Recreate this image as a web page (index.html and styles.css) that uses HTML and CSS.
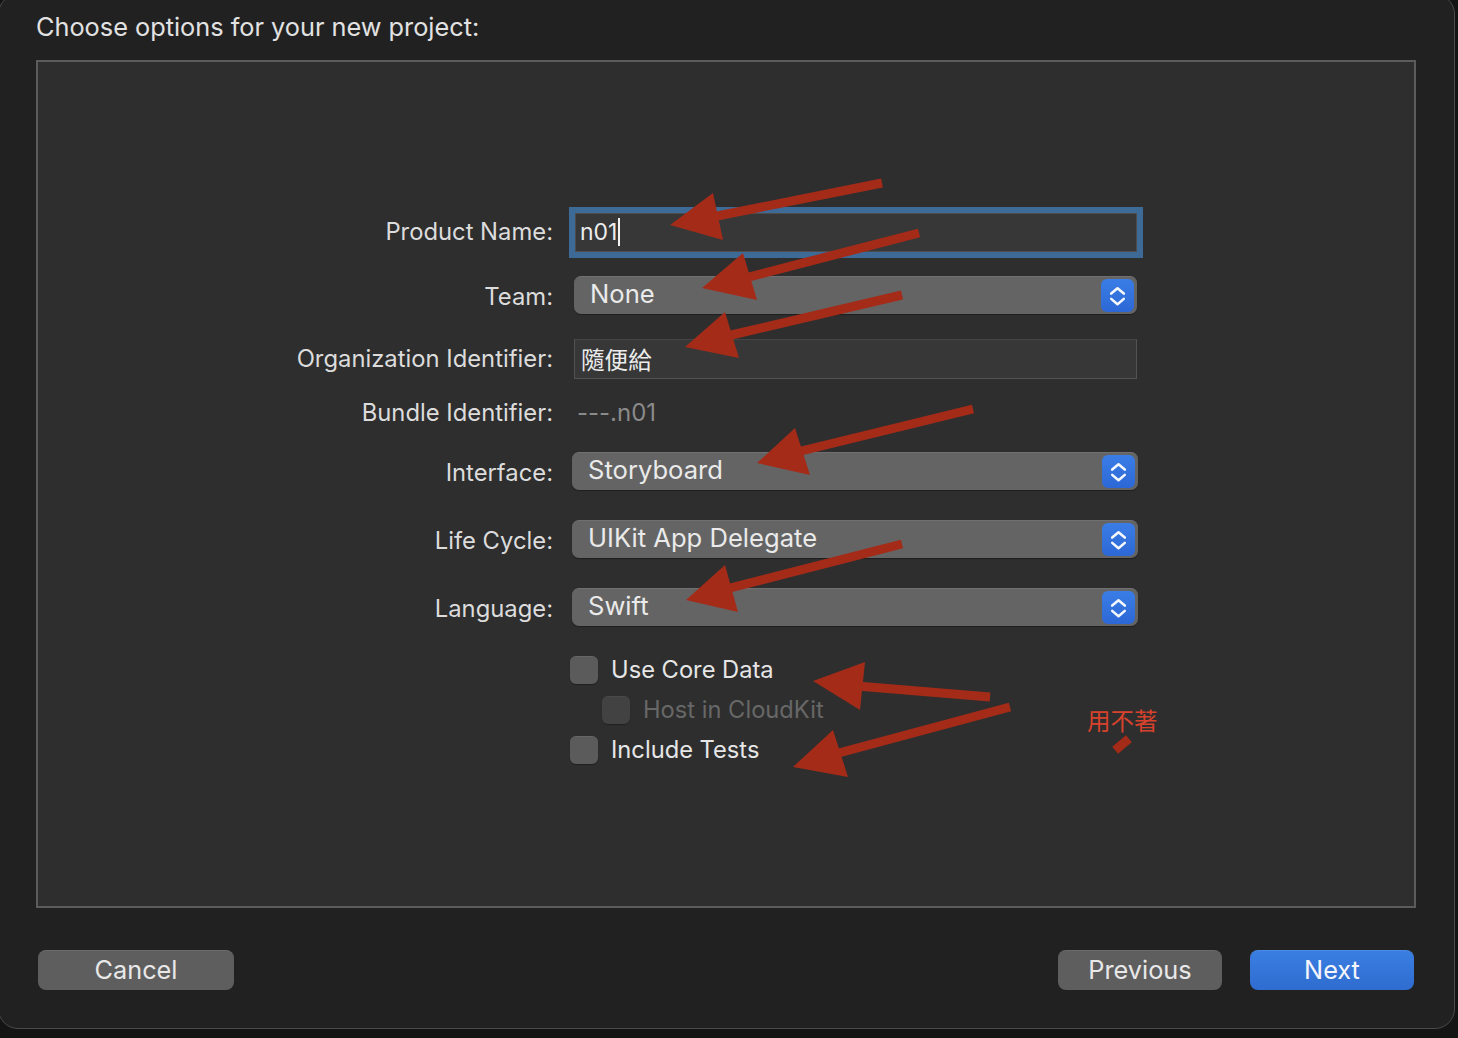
FILE: index.html
```html
<!DOCTYPE html>
<html>
<head>
<meta charset="utf-8">
<title>Choose options</title>
<link rel="stylesheet" href="styles.css">
</head>
<body>
<div class="window">
  <div class="title">Choose options for your new project:</div>
  <div class="panel">
    <div class="form">
      <div class="row r-name">
        <div class="lbl">Product Name:</div>
        <div class="field focus"><span class="val">n01</span><span class="caret"></span></div>
      </div>
      <div class="row r-team">
        <div class="lbl lbl-pop">Team:</div>
        <div class="popup team"><span class="ptext">None</span><span class="stepper"><svg viewBox="0 0 34 34" width="34" height="34"><path d="M10.5 14.5 L17 9 L23.5 14.5" /><path d="M10.5 20 L17 25.5 L23.5 20" /></svg></span></div>
      </div>
      <div class="row r-org">
        <div class="lbl">Organization Identifier:</div>
        <div class="field plain"><span class="val cjk">隨便給</span></div>
      </div>
      <div class="row r-bundle">
        <div class="lbl">Bundle Identifier:</div>
        <div class="bundle">---.n01</div>
      </div>
      <div class="row r-pop r-iface">
        <div class="lbl lbl-pop">Interface:</div>
        <div class="popup"><span class="ptext">Storyboard</span><span class="stepper"><svg viewBox="0 0 34 34" width="34" height="34"><path d="M10.5 14.5 L17 9 L23.5 14.5" /><path d="M10.5 20 L17 25.5 L23.5 20" /></svg></span></div>
      </div>
      <div class="row r-pop">
        <div class="lbl lbl-pop">Life Cycle:</div>
        <div class="popup"><span class="ptext">UIKit App Delegate</span><span class="stepper"><svg viewBox="0 0 34 34" width="34" height="34"><path d="M10.5 14.5 L17 9 L23.5 14.5" /><path d="M10.5 20 L17 25.5 L23.5 20" /></svg></span></div>
      </div>
      <div class="row r-pop">
        <div class="lbl lbl-pop">Language:</div>
        <div class="popup"><span class="ptext">Swift</span><span class="stepper"><svg viewBox="0 0 34 34" width="34" height="34"><path d="M10.5 14.5 L17 9 L23.5 14.5" /><path d="M10.5 20 L17 25.5 L23.5 20" /></svg></span></div>
      </div>
      <div class="row r-check r-check-first">
        <span class="box"></span><span class="ctext">Use Core Data</span>
      </div>
      <div class="row r-check r-sub">
        <span class="box disabled"></span><span class="ctext dim">Host in CloudKit</span>
      </div>
      <div class="row r-check">
        <span class="box"></span><span class="ctext">Include Tests</span>
      </div>
    </div>
  </div>
  <div class="footer">
    <div class="btn cancel">Cancel</div>
    <div class="right-btns">
      <div class="btn prev">Previous</div>
      <div class="btn next">Next</div>
    </div>
  </div>
</div>

<svg class="annot" width="1458" height="1038" viewBox="0 0 1458 1038">
  <g stroke="#a52b19" stroke-width="9" fill="none">
    <line x1="882" y1="183" x2="712" y2="217"/>
    <line x1="919" y1="233" x2="745" y2="278"/>
    <line x1="902" y1="295" x2="727" y2="336"/>
    <line x1="973" y1="409" x2="797" y2="452"/>
    <line x1="902" y1="544" x2="726" y2="589"/>
    <line x1="990" y1="697" x2="857" y2="686"/>
    <line x1="1010" y1="707" x2="835" y2="754"/>
  </g>
  <g fill="#a52b19">
    <polygon points="670,225 713,193 723,240"/>
    <polygon points="702,288 743,253 757,300"/>
    <polygon points="685,347 725,312 739,358"/>
    <polygon points="757,463 795,428 810,475"/>
    <polygon points="686,600 725,565 738,612"/>
    <polygon points="813,681 865,662 860,710"/>
    <polygon points="793,767 833,730 848,777"/>
    <rect x="1113" y="740" width="18" height="9" transform="rotate(-40 1122 744.5)"/>
  </g>
</svg>
<div class="note">用不著</div>
</body>
</html>
```
FILE: styles.css
```css
html, body {
  margin: 0;
  padding: 0;
}
body {
  width: 1458px;
  height: 1038px;
  overflow: hidden;
  background: #141414;
  font-family: "Inter", "Noto Sans CJK TC", sans-serif;
  color: #dedede;
  position: relative;
}
.window {
  box-sizing: border-box;
  margin: -6px 0 0 -2px;
  width: 1457px;
  height: 1035px;
  border: 1px solid #4a4a4a;
  border-radius: 20px;
  background: #212121;
  padding: 17px 0 0 37px;
}
.title {
  height: 30px;
  line-height: 30px;
  font-size: 25.3px;
  color: #e2e2e2;
}
.panel {
  box-sizing: border-box;
  margin-top: 18px;
  width: 1380px;
  height: 848px;
  border: 2px solid #5c5c5c;
  background: #2e2e2e;
}
.form {
  padding-top: 144px;
  display: flex;
  flex-direction: column;
}
.row {
  display: flex;
  align-items: center;
}
.lbl {
  width: 515px;
  margin-right: 15px;
  text-align: right;
  font-size: 23.8px;
  line-height: 30px;
  color: #dcdcdc;
}
.lbl-pop {
  padding-top: 4px;
}
.r-name {
  height: 52px;
}
.field {
  box-sizing: border-box;
  height: 39px;
  display: flex;
  align-items: center;
  background: #373737;
}
.field.focus {
  margin-left: 7px;
  width: 562px;
  border: 1px solid #4d4d4d;
  box-shadow: 0 0 0 6px #3d6a97;
  padding-left: 4px;
}
.field.plain {
  margin-left: 6px;
  width: 563px;
  height: 40px;
  border: 1px solid #525252;
  border-top-color: #454545;
  padding-left: 6px;
}
.val {
  font-size: 23px;
  color: #ececec;
  line-height: 30px;
}
.cjk {
  font-family: "Noto Sans CJK TC", sans-serif;
  font-size: 23.6px;
}
.caret {
  display: inline-block;
  width: 2px;
  height: 28px;
  background: #f2f2f2;
  margin-left: 1px;
}
.r-team {
  margin-top: 18px;
  height: 38px;
}
.popup {
  box-sizing: border-box;
  position: relative;
  height: 38px;
  width: 566px;
  margin-left: 4px;
  border-radius: 7px;
  background: #646464;
  border-top: 1px solid #707070;
  box-shadow: 0 1px 1px rgba(0, 0, 0, 0.35);
  display: flex;
  align-items: center;
  padding-left: 16px;
}
.popup.team {
  width: 563px;
  margin-left: 6px;
}
.ptext {
  flex: 1;
  font-size: 25.6px;
  color: #eaeaea;
  line-height: 30px;
  padding-bottom: 3px;
}
.stepper {
  width: 33px;
  height: 33px;
  margin-right: 3px;
  border-radius: 6px;
  background: linear-gradient(#3a7de6, #2d68d6);
  display: flex;
  align-items: center;
  justify-content: center;
  overflow: hidden;
}
.stepper svg path {
  fill: none;
  stroke: #f4f7fc;
  stroke-width: 2.6;
  stroke-linecap: round;
  stroke-linejoin: round;
}
.r-org {
  margin-top: 25px;
  height: 40px;
}
.r-bundle {
  margin-top: 19px;
  height: 30px;
}
.bundle {
  margin-left: 9px;
  font-size: 24px;
  color: #8a8a8a;
  line-height: 30px;
}
.r-iface {
  margin-top: 24px !important;
}
.r-pop {
  margin-top: 30px;
  height: 38px;
}
.r-check {
  margin-top: 12px;
  height: 28px;
  padding-left: 532px;
}
.r-check-first {
  margin-top: 30px;
}
.r-sub {
  padding-left: 564px;
}
.box {
  box-sizing: border-box;
  width: 28px;
  height: 28px;
  border-radius: 6px;
  background: #5b5b5b;
  border-top: 1px solid #666;
  box-shadow: 0 1px 1px rgba(0, 0, 0, 0.3);
  margin-right: 13px;
}
.box.disabled {
  background: #424242;
  border-top-color: #4a4a4a;
}
.ctext {
  font-size: 23.7px;
  color: #e6e6e6;
  line-height: 30px;
}
.ctext.dim {
  color: #676767;
}
.footer {
  margin-top: 42px;
  width: 1380px;
  display: flex;
  justify-content: space-between;
}
.right-btns {
  display: flex;
  gap: 28px;
  margin-right: 2px;
}
.btn {
  box-sizing: border-box;
  height: 40px;
  border-radius: 8px;
  display: flex;
  align-items: center;
  justify-content: center;
  font-size: 25.3px;
  color: #e8e8e8;
  background: #5e5e5e;
  border-top: 1px solid #6a6a6a;
  padding-bottom: 3px;
}
.cancel {
  width: 196px;
  margin-left: 2px;
}
.prev {
  width: 164px;
}
.next {
  width: 164px;
  background: linear-gradient(#3a7ee2, #2f6ccf);
  border-top-color: #4b8ae6;
  color: #f4f6fb;
}
.annot {
  position: absolute;
  left: 0;
  top: 0;
  pointer-events: none;
}
.note {
  position: absolute;
  left: 1087px;
  top: 704px;
  font-family: "Noto Sans CJK TC", sans-serif;
  font-size: 23.5px;
  line-height: 32px;
  color: #d8422c;
}
```
